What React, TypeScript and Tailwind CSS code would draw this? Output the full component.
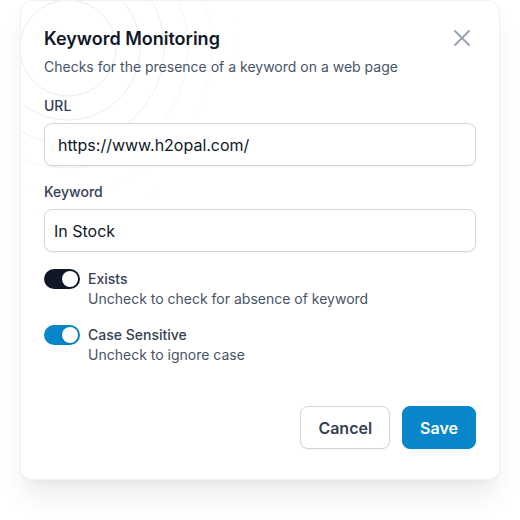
import React, { useState } from "react";
import { X } from "lucide-react";

// decorative rings behind the header
const Rings = () => {
  const radii = [48, 72, 96, 120, 144, 168];
  return (
    <svg
      className="pointer-events-none absolute -left-[121px] -top-[121px]"
      width="336"
      height="336"
      viewBox="0 0 336 336"
      fill="none"
    >
      <defs>
        <radialGradient id="fade" cx="168" cy="168" r="168" gradientUnits="userSpaceOnUse">
          <stop offset="0" stopColor="#fff" />
          <stop offset="0.55" stopColor="#fff" stopOpacity="0.7" />
          <stop offset="1" stopColor="#fff" stopOpacity="0" />
        </radialGradient>
        <mask id="ringMask">
          <rect width="336" height="336" fill="url(#fade)" />
        </mask>
      </defs>
      <g mask="url(#ringMask)">
        {radii.map((r) => (
          <circle key={r} cx="168" cy="168" r={r} stroke="#e4e7ec" strokeWidth="1" />
        ))}
      </g>
    </svg>
  );
};

type ToggleProps = {
  checked: boolean;
  onChange: (v: boolean) => void;
  dark?: boolean;
};

const Toggle = ({ checked, onChange, dark }: ToggleProps) => (
  <button
    type="button"
    onClick={() => onChange(!checked)}
    className={`flex h-5 w-9 shrink-0 items-center rounded-full p-0.5 ${
      checked ? (dark ? "justify-end bg-[#101828]" : "justify-end bg-[#0786c9]") : "justify-start bg-[#f2f4f7]"
    }`}
  >
    <span className="h-4 w-4 rounded-full bg-white shadow-[0_1px_3px_rgba(16,24,40,0.1),0_1px_2px_rgba(16,24,40,0.06)]" />
  </button>
);

export default function App() {
  const [url, setUrl] = useState("https://www.h2opal.com/");
  const [keyword, setKeyword] = useState("In Stock");
  const [exists, setExists] = useState(true);
  const [caseSensitive, setCaseSensitive] = useState(true);

  return (
    <div className="min-h-[520px] w-full bg-white font-['Inter',sans-serif]">
      <div className="relative mx-auto w-[480px] overflow-hidden rounded-xl border border-[#eef0f3] bg-white shadow-[0_20px_24px_-4px_rgba(16,24,40,0.08),0_8px_8px_-4px_rgba(16,24,40,0.03)]">
        <Rings />
        <div className="relative flex flex-col px-[23px] pt-6 pb-[30px]">
          <div className="flex items-start justify-between">
            <div className="flex flex-col gap-1">
              <h2 className="text-lg leading-7 font-semibold text-[#101828]">Keyword Monitoring</h2>
              <p className="text-sm leading-5 text-[#475467]">Checks for the presence of a keyword on a web page</p>
            </div>
            <button type="button" className="-mt-px text-[#98a2b3]">
              <X size={28} strokeWidth={1.6} />
            </button>
          </div>

          <label className="mt-[19px] flex flex-col gap-[7px]">
            <span className="text-sm leading-5 font-medium text-[#344054]">URL</span>
            <input
              value={url}
              onChange={(e) => setUrl(e.target.value)}
              className="h-[43px] w-full rounded-lg border border-[#d0d5dd] bg-white px-[13px] text-base text-[#101828] shadow-[0_1px_2px_rgba(16,24,40,0.05)] outline-none"
            />
          </label>

          <label className="mt-4 flex flex-col gap-[7px]">
            <span className="text-sm leading-5 font-medium text-[#344054]">Keyword</span>
            <input
              value={keyword}
              onChange={(e) => setKeyword(e.target.value)}
              className="h-[43px] w-full rounded-lg border border-[#d0d5dd] bg-white px-[9px] text-base text-[#101828] shadow-[0_1px_2px_rgba(16,24,40,0.05)] outline-none"
            />
          </label>

          <div className="mt-[17px] flex flex-col gap-4">
            <div className="flex items-start gap-2">
              <Toggle checked={exists} onChange={setExists} dark />
              <div className="flex flex-col">
                <span className="text-sm leading-5 font-medium text-[#344054]">Exists</span>
                <span className="text-sm leading-5 text-[#475467]">Uncheck to check for absence of keyword</span>
              </div>
            </div>
            <div className="flex items-start gap-2">
              <Toggle checked={caseSensitive} onChange={setCaseSensitive} />
              <div className="flex flex-col">
                <span className="text-sm leading-5 font-medium text-[#344054]">Case Sensitive</span>
                <span className="text-sm leading-5 text-[#475467]">Uncheck to ignore case</span>
              </div>
            </div>
          </div>

          <div className="mt-[41px] flex justify-end gap-3">
            <button
              type="button"
              className="h-[43px] rounded-lg border border-[#d0d5dd] bg-white px-[17px] text-base font-semibold text-[#344054] shadow-[0_1px_2px_rgba(16,24,40,0.05)]"
            >
              Cancel
            </button>
            <button
              type="button"
              className="h-[43px] rounded-lg border border-[#0786c9] bg-[#0786c9] px-[17px] text-base font-semibold text-white shadow-[0_1px_2px_rgba(16,24,40,0.05)]"
            >
              Save
            </button>
          </div>
        </div>
      </div>
    </div>
  );
}
